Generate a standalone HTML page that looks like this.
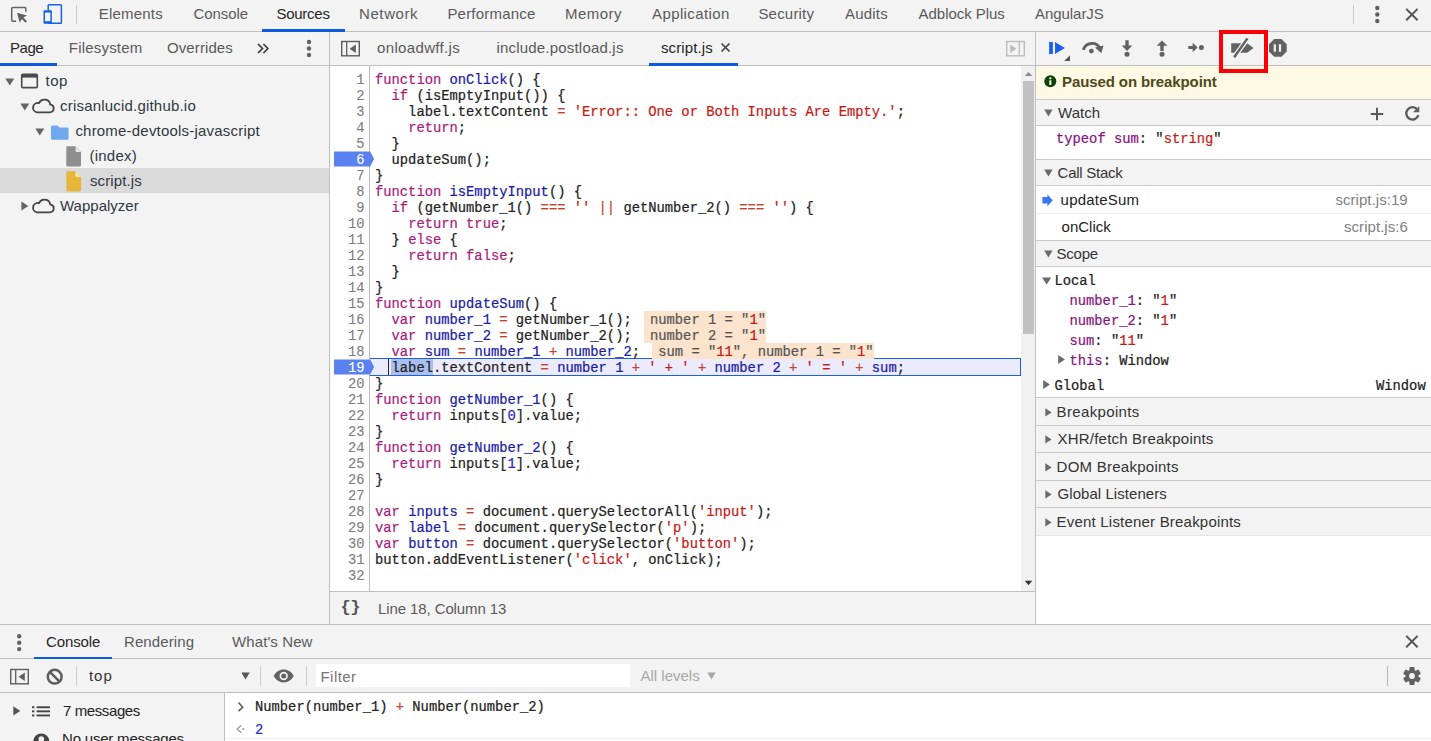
<!DOCTYPE html>
<html><head><meta charset="utf-8"><title>DevTools</title>
<style>
html,body{margin:0;padding:0}
body{width:1431px;height:741px;overflow:hidden;position:relative;background:#fff;font-family:"Liberation Sans",sans-serif;font-size:15px}
.b{position:absolute;display:block}
.t{position:absolute;white-space:pre;font-family:"Liberation Sans",sans-serif;font-size:15px;line-height:20px;height:20px}
.m{position:absolute;white-space:pre;font-family:"Liberation Mono",monospace;font-size:13.8px;line-height:16px;height:16px;color:#222;-webkit-text-stroke:0.22px}
.k{color:#a81c7e}.d{color:#1a1aa6}.s{color:#c41a16}.o{color:#c2452d}.n{color:#2a1fc0}.p{color:#881280}.n2{color:#2030cc}.u{color:transparent;-webkit-text-stroke:0}.g{color:#555}
</style></head>
<body>
<div class="b" style="left:0px;top:0px;width:1431px;height:31px;background:#f3f3f3;"></div>
<div class="b" style="left:0px;top:31px;width:1431px;height:1px;background:#bfbfbf;"></div>
<div class="b" style="left:0px;top:32px;width:329px;height:593px;background:#f3f3f3;"></div>
<div class="b" style="left:329px;top:32px;width:1px;height:593px;background:#bfbfbf;"></div>
<div class="b" style="left:0px;top:65px;width:329px;height:1px;background:#bfbfbf;"></div>
<div class="b" style="left:330px;top:32px;width:705px;height:33px;background:#f3f3f3;"></div>
<div class="b" style="left:330px;top:65px;width:705px;height:1px;background:#bfbfbf;"></div>
<div class="b" style="left:330px;top:592px;width:705px;height:33px;background:#f3f3f3;"></div>
<div class="b" style="left:330px;top:591px;width:705px;height:1px;background:#bfbfbf;"></div>
<div class="b" style="left:1035px;top:32px;width:1px;height:593px;background:#bfbfbf;"></div>
<div class="b" style="left:1036px;top:32px;width:395px;height:33px;background:#f3f3f3;"></div>
<div class="b" style="left:1036px;top:65px;width:395px;height:1px;background:#bfbfbf;"></div>
<svg class="b" style="left:8px;top:4px" width="24" height="22" viewBox="0 0 24 22"><path d="M17.8 7.7V4.4a1 1 0 0 0-1-1H4.7a1 1 0 0 0-1 1v11.8a1 1 0 0 0 1 1h3.4" fill="none" stroke="#626262" stroke-width="1.5"/><path d="M9 8.8l10 2.7-3.6 2.1 3.6 3.6-1.5 1.5-3.6-3.6-2.1 3.6z" fill="#626262"/></svg>
<svg class="b" style="left:42px;top:2px" width="22" height="24" viewBox="0 0 22 24"><rect x="6.2" y="2.7" width="13.2" height="18.6" rx="0.8" fill="none" stroke="#1565e0" stroke-width="1.5"/><rect x="1.5" y="8.2" width="8.4" height="13.6" rx="1" fill="#1565e0"/><rect x="3" y="10.6" width="5.4" height="8.6" fill="#f3f3f3"/></svg>
<div class="b" style="left:76px;top:5px;width:1px;height:19px;background:#ccc;"></div>
<span class="t" style="left:98.80px;top:4.00px;color:#5a5a5a;letter-spacing:0.2px;">Elements</span>
<span class="t" style="left:193.60px;top:4.00px;color:#5a5a5a;letter-spacing:-0.1px;">Console</span>
<span class="t" style="left:276.40px;top:4.00px;color:#262626;letter-spacing:-0.25px;">Sources</span>
<span class="t" style="left:359.00px;top:4.00px;color:#5a5a5a;letter-spacing:0.6px;">Network</span>
<span class="t" style="left:447.40px;top:4.00px;color:#5a5a5a;letter-spacing:0.2px;">Performance</span>
<span class="t" style="left:565.00px;top:4.00px;color:#5a5a5a;letter-spacing:0.45px;">Memory</span>
<span class="t" style="left:652.00px;top:4.00px;color:#5a5a5a;letter-spacing:0.4px;">Application</span>
<span class="t" style="left:758.40px;top:4.00px;color:#5a5a5a;letter-spacing:0.2px;">Security</span>
<span class="t" style="left:845.00px;top:4.00px;color:#5a5a5a;letter-spacing:0.2px;">Audits</span>
<span class="t" style="left:918.60px;top:4.00px;color:#5a5a5a;letter-spacing:-0.05px;">Adblock Plus</span>
<span class="t" style="left:1035.00px;top:4.00px;color:#5a5a5a;letter-spacing:-0.05px;">AngularJS</span>
<div class="b" style="left:262px;top:29px;width:83px;height:3px;background:#0b5ae0;"></div>
<div class="b" style="left:1353px;top:5px;width:1px;height:19px;background:#ccc;"></div>
<svg class="b" style="left:1373px;top:5px" width="8" height="20" viewBox="0 0 8 20"><circle cx="4.3" cy="3" r="2.2" fill="#626262"/><circle cx="4.3" cy="9.5" r="2.2" fill="#626262"/><circle cx="4.3" cy="16" r="2.2" fill="#626262"/></svg>
<svg class="b" style="left:1404px;top:7px" width="16" height="15" viewBox="0 0 16 15"><path d="M2.2 1.9l11.4 11.4M13.6 1.9L2.2 13.3" stroke="#555" stroke-width="2" fill="none"/></svg>
<span class="t" style="left:10.00px;top:38.00px;color:#262626;letter-spacing:-0.45px;">Page</span>
<span class="t" style="left:68.80px;top:38.00px;color:#5a5a5a;letter-spacing:0.2px;">Filesystem</span>
<span class="t" style="left:167.00px;top:38.00px;color:#5a5a5a;letter-spacing:0.1px;">Overrides</span>
<div class="b" style="left:0px;top:63px;width:57px;height:3px;background:#0b5ae0;"></div>
<svg class="b" style="left:257px;top:42.5px" width="12" height="11" viewBox="0 0 12 11"><path d="M1 1l4.500 4.500L1 10M6.400 1l4.500 4.500L6.400 10" fill="none" stroke="#3a3a3a" stroke-width="1.700"/></svg>
<svg class="b" style="left:305px;top:39px" width="8" height="20" viewBox="0 0 8 20"><circle cx="4" cy="3" r="2.2" fill="#626262"/><circle cx="4" cy="9.5" r="2.2" fill="#626262"/><circle cx="4" cy="16" r="2.2" fill="#626262"/></svg>
<div class="b" style="left:0px;top:168px;width:329px;height:25px;background:#dadada;"></div>
<svg class="b" style="left:5px;top:77.5px" width="10" height="8" viewBox="0 0 10 8"><path d="M0.3 0.5h9L4.8 7.6z" fill="#646464"/></svg>
<svg class="b" style="left:20px;top:102.5px" width="10" height="8" viewBox="0 0 10 8"><path d="M0.3 0.5h9L4.8 7.6z" fill="#646464"/></svg>
<svg class="b" style="left:35px;top:127.5px" width="10" height="8" viewBox="0 0 10 8"><path d="M0.3 0.5h9L4.8 7.6z" fill="#646464"/></svg>
<svg class="b" style="left:21px;top:201px" width="8" height="10" viewBox="0 0 8 10"><path d="M0.4 0.4v9L7.4 4.9z" fill="#646464"/></svg>
<svg class="b" style="left:20px;top:73px" width="19" height="16" viewBox="0 0 19 16"><rect x="1.7" y="1.4" width="15.6" height="13.2" rx="1.2" fill="none" stroke="#4a4a4a" stroke-width="1.6"/><rect x="1.7" y="1.4" width="15.6" height="3.2" fill="#4a4a4a"/></svg>
<svg class="b" style="left:30.5px;top:98px" width="26" height="16" viewBox="0 0 26 16"><g transform="translate(-0.6,0) scale(1.05,1)"><path d="M6.3 14.300h12a3.900 3.900 0 0 0 .6-7.750a5.600 5.600 0 0 0-10.700-1.500a4.700 4.700 0 0 0-1.900 9.250z" fill="none" stroke="#444" stroke-width="1.750" stroke-linejoin="round"/></g></svg>
<svg class="b" style="left:30.5px;top:198px" width="26" height="16" viewBox="0 0 26 16"><g transform="translate(-0.6,0) scale(1.05,1)"><path d="M6.3 14.300h12a3.900 3.900 0 0 0 .6-7.750a5.600 5.600 0 0 0-10.700-1.500a4.700 4.700 0 0 0-1.900 9.250z" fill="none" stroke="#444" stroke-width="1.750" stroke-linejoin="round"/></g></svg>
<svg class="b" style="left:51px;top:124.5px" width="18" height="16" viewBox="0 0 18 16"><path d="M0 1.600a1.200 1.200 0 0 1 1.200-1.200h5.200l2 2.200h8a1.200 1.200 0 0 1 1.200 1.200v9.700a1.200 1.200 0 0 1-1.200 1.200H1.200a1.200 1.200 0 0 1-1.200-1.200z" fill="#70a8ee"/></svg>
<svg class="b" style="left:66px;top:145.5px" width="16" height="21" viewBox="0 0 16 21"><path d="M0.3 1.6a1.3 1.3 0 0 1 1.3-1.3h7.9l5.5 5.6v13.2a1.3 1.3 0 0 1-1.3 1.3H1.6a1.3 1.3 0 0 1-1.3-1.3z" fill="#8e8e8e"/><path d="M9.5 0.3v4.4a1.2 1.2 0 0 0 1.2 1.2H15z" fill="#e6e6e6"/></svg>
<svg class="b" style="left:66px;top:170.5px" width="16" height="21" viewBox="0 0 16 21"><path d="M0.3 1.6a1.3 1.3 0 0 1 1.3-1.3h7.9l5.5 5.6v13.2a1.3 1.3 0 0 1-1.3 1.3H1.6a1.3 1.3 0 0 1-1.3-1.3z" fill="#e4b63a"/><path d="M9.5 0.3v4.4a1.2 1.2 0 0 0 1.2 1.2H15z" fill="#f7e8b8"/></svg>
<span class="t" style="left:45.60px;top:71.00px;color:#303942;letter-spacing:0.45px;">top</span>
<span class="t" style="left:60.00px;top:96.00px;color:#303942;letter-spacing:0.2px;">crisanlucid.github.io</span>
<span class="t" style="left:75.40px;top:121.00px;color:#303942;letter-spacing:0.2px;">chrome-devtools-javascript</span>
<span class="t" style="left:89.40px;top:146.00px;color:#303942;letter-spacing:0.25px;">(index)</span>
<span class="t" style="left:90.00px;top:171.00px;color:#303942;letter-spacing:0.1px;">script.js</span>
<span class="t" style="left:60.00px;top:196.00px;color:#303942;letter-spacing:0.0px;">Wappalyzer</span>
<svg class="b" style="left:341px;top:40px" width="19" height="17" viewBox="0 0 19 17"><g ><rect x="0.700" y="1.500" width="17.600" height="14.300" fill="none" stroke="#5e5e5e" stroke-width="1.400"/><path d="M5.700 1.500v14.300" stroke="#5e5e5e" stroke-width="1.300"/><path d="M14.800 4.400v8.500L8.600 8.650z" fill="#5e5e5e"/></g></svg>
<svg class="b" style="left:1006px;top:40px" width="19" height="17" viewBox="0 0 19 17"><g transform="translate(19,0) scale(-1,1)"><rect x="0.700" y="1.500" width="17.600" height="14.300" fill="none" stroke="#bdbdbd" stroke-width="1.400"/><path d="M5.700 1.500v14.300" stroke="#bdbdbd" stroke-width="1.300"/><path d="M14.800 4.400v8.500L8.600 8.650z" fill="#bdbdbd"/></g></svg>
<span class="t" style="left:377.00px;top:38.00px;color:#5a5a5a;letter-spacing:0.35px;">onloadwff.js</span>
<span class="t" style="left:496.40px;top:38.00px;color:#5a5a5a;letter-spacing:0.2px;">include.postload.js</span>
<span class="t" style="left:661.00px;top:38.00px;color:#262626;letter-spacing:0.1px;">script.js</span>
<svg class="b" style="left:720px;top:42px" width="11" height="11" viewBox="0 0 11 11"><path d="M1.5 1.5l8 8M9.5 1.5l-8 8" stroke="#444" stroke-width="1.7" fill="none"/></svg>
<div class="b" style="left:649px;top:63px;width:89px;height:3px;background:#0b5ae0;"></div>
<span class="b" style="left:340.5px;top:598px;font:700 17px 'Liberation Mono',monospace;letter-spacing:-0.400px;color:#555;line-height:20px">{}</span>
<span class="t" style="left:378.00px;top:599.00px;color:#5a5a5a;letter-spacing:-0.1px;">Line 18, Column 13</span>
<div class="b" style="left:369px;top:66px;width:1px;height:525px;background:#bbb;"></div>
<div class="b" style="left:1021px;top:66px;width:14px;height:525px;background:#f1f1f1;"></div>
<div class="b" style="left:1023px;top:81px;width:11px;height:253px;background:#c1c1c1;"></div>
<svg class="b" style="left:1021px;top:66px" width="14" height="16" viewBox="0 0 14 16"><path d="M3.800 10.100L7.500 5.900l3.700 4.200z" fill="#8a8a8a"/></svg>
<svg class="b" style="left:1021px;top:575px" width="14" height="16" viewBox="0 0 14 16"><path d="M3.800 5.800L7.500 10.200l3.700-4.400z" fill="#333"/></svg>
<div class="b" style="left:370px;top:358px;width:651px;height:18px;background:#ebebfd;box-sizing:border-box;border:1px solid #1e5fe0;border-left:none"></div>
<div class="b" style="left:391px;top:359px;width:42px;height:16px;background:#a9bff0;"></div>
<div class="b" style="left:388px;top:359px;width:1px;height:16px;background:#223;"></div>
<svg class="b" style="left:334px;top:151px" width="41" height="16" viewBox="0 0 41 16"><path d="M0 0.5h36.2l3.9 7.5-3.9 7.5H0z" fill="#5b81f0"/></svg>
<svg class="b" style="left:334px;top:359px" width="41" height="16" viewBox="0 0 41 16"><path d="M0 0.5h36.2l3.9 7.5-3.9 7.5H0z" fill="#5b81f0"/></svg>
<div class="b" style="left:644px;top:311px;width:122px;height:32px;background:#fce3cd;"></div>
<div class="b" style="left:652px;top:343px;width:222px;height:16px;background:#fce3cd;"></div>
<span class="m" style="left:330px;width:34.5px;text-align:right;top:73.0px;color:#808080;-webkit-text-stroke:0.12px">1</span>
<span class="m" style="left:375.0px;top:73.0px"><span class="k">function</span> <span class="d">onClick</span>() {</span>
<span class="m" style="left:330px;width:34.5px;text-align:right;top:89.0px;color:#808080;-webkit-text-stroke:0.12px">2</span>
<span class="m" style="left:375.0px;top:89.0px">  <span class="k">if</span> (isEmptyInput()) {</span>
<span class="m" style="left:330px;width:34.5px;text-align:right;top:105.0px;color:#808080;-webkit-text-stroke:0.12px">3</span>
<span class="m" style="left:375.0px;top:105.0px">    label.textContent <span class="o">=</span> <span class="s">'Error:: One or Both Inputs Are Empty.'</span>;</span>
<span class="m" style="left:330px;width:34.5px;text-align:right;top:121.0px;color:#808080;-webkit-text-stroke:0.12px">4</span>
<span class="m" style="left:375.0px;top:121.0px">    <span class="k">return</span>;</span>
<span class="m" style="left:330px;width:34.5px;text-align:right;top:137.0px;color:#808080;-webkit-text-stroke:0.12px">5</span>
<span class="m" style="left:375.0px;top:137.0px">  }</span>
<span class="m" style="left:330px;width:34.5px;text-align:right;top:153.0px;color:#fff;-webkit-text-stroke:0.12px">6</span>
<span class="m" style="left:375.0px;top:153.0px">  updateSum();</span>
<span class="m" style="left:330px;width:34.5px;text-align:right;top:169.0px;color:#808080;-webkit-text-stroke:0.12px">7</span>
<span class="m" style="left:375.0px;top:169.0px">}</span>
<span class="m" style="left:330px;width:34.5px;text-align:right;top:185.0px;color:#808080;-webkit-text-stroke:0.12px">8</span>
<span class="m" style="left:375.0px;top:185.0px"><span class="k">function</span> <span class="d">isEmptyInput</span>() {</span>
<span class="m" style="left:330px;width:34.5px;text-align:right;top:201.0px;color:#808080;-webkit-text-stroke:0.12px">9</span>
<span class="m" style="left:375.0px;top:201.0px">  <span class="k">if</span> (getNumber_1() <span class="o">===</span> <span class="s">''</span> <span class="o">||</span> getNumber_2() <span class="o">===</span> <span class="s">''</span>) {</span>
<span class="m" style="left:330px;width:34.5px;text-align:right;top:217.0px;color:#808080;-webkit-text-stroke:0.12px">10</span>
<span class="m" style="left:375.0px;top:217.0px">    <span class="k">return</span> <span class="k">true</span>;</span>
<span class="m" style="left:330px;width:34.5px;text-align:right;top:233.0px;color:#808080;-webkit-text-stroke:0.12px">11</span>
<span class="m" style="left:375.0px;top:233.0px">  } <span class="k">else</span> {</span>
<span class="m" style="left:330px;width:34.5px;text-align:right;top:249.0px;color:#808080;-webkit-text-stroke:0.12px">12</span>
<span class="m" style="left:375.0px;top:249.0px">    <span class="k">return</span> <span class="k">false</span>;</span>
<span class="m" style="left:330px;width:34.5px;text-align:right;top:265.0px;color:#808080;-webkit-text-stroke:0.12px">13</span>
<span class="m" style="left:375.0px;top:265.0px">  }</span>
<span class="m" style="left:330px;width:34.5px;text-align:right;top:281.0px;color:#808080;-webkit-text-stroke:0.12px">14</span>
<span class="m" style="left:375.0px;top:281.0px">}</span>
<span class="m" style="left:330px;width:34.5px;text-align:right;top:297.0px;color:#808080;-webkit-text-stroke:0.12px">15</span>
<span class="m" style="left:375.0px;top:297.0px"><span class="k">function</span> <span class="d">updateSum</span>() {</span>
<span class="m" style="left:330px;width:34.5px;text-align:right;top:313.0px;color:#808080;-webkit-text-stroke:0.12px">16</span>
<span class="m" style="left:375.0px;top:313.0px">  <span class="k">var</span> <span class="d">number_1</span> <span class="o">=</span> getNumber_1();</span>
<span class="m" style="left:330px;width:34.5px;text-align:right;top:329.0px;color:#808080;-webkit-text-stroke:0.12px">17</span>
<span class="m" style="left:375.0px;top:329.0px">  <span class="k">var</span> <span class="d">number_2</span> <span class="o">=</span> getNumber_2();</span>
<span class="m" style="left:330px;width:34.5px;text-align:right;top:345.0px;color:#808080;-webkit-text-stroke:0.12px">18</span>
<span class="m" style="left:375.0px;top:345.0px">  <span class="k">var</span> <span class="d">sum</span> <span class="o">=</span> <span class="d">number_1</span> <span class="o">+</span> <span class="d">number_2</span>;</span>
<span class="m" style="left:330px;width:34.5px;text-align:right;top:361.0px;color:#fff;-webkit-text-stroke:0.12px">19</span>
<span class="m" style="left:375.0px;top:361.0px">  label.textContent <span class="o">=</span> <span class="d">number<span class="u">_</span>1</span> <span class="o">+</span> <span class="s">' + '</span> <span class="o">+</span> <span class="d">number<span class="u">_</span>2</span> <span class="o">+</span> <span class="s">' = '</span> <span class="o">+</span> <span class="d">sum</span>;</span>
<span class="m" style="left:330px;width:34.5px;text-align:right;top:377.0px;color:#808080;-webkit-text-stroke:0.12px">20</span>
<span class="m" style="left:375.0px;top:377.0px">}</span>
<span class="m" style="left:330px;width:34.5px;text-align:right;top:393.0px;color:#808080;-webkit-text-stroke:0.12px">21</span>
<span class="m" style="left:375.0px;top:393.0px"><span class="k">function</span> <span class="d">getNumber_1</span>() {</span>
<span class="m" style="left:330px;width:34.5px;text-align:right;top:409.0px;color:#808080;-webkit-text-stroke:0.12px">22</span>
<span class="m" style="left:375.0px;top:409.0px">  <span class="k">return</span> inputs[<span class="n">0</span>].value;</span>
<span class="m" style="left:330px;width:34.5px;text-align:right;top:425.0px;color:#808080;-webkit-text-stroke:0.12px">23</span>
<span class="m" style="left:375.0px;top:425.0px">}</span>
<span class="m" style="left:330px;width:34.5px;text-align:right;top:441.0px;color:#808080;-webkit-text-stroke:0.12px">24</span>
<span class="m" style="left:375.0px;top:441.0px"><span class="k">function</span> <span class="d">getNumber_2</span>() {</span>
<span class="m" style="left:330px;width:34.5px;text-align:right;top:457.0px;color:#808080;-webkit-text-stroke:0.12px">25</span>
<span class="m" style="left:375.0px;top:457.0px">  <span class="k">return</span> inputs[<span class="n">1</span>].value;</span>
<span class="m" style="left:330px;width:34.5px;text-align:right;top:473.0px;color:#808080;-webkit-text-stroke:0.12px">26</span>
<span class="m" style="left:375.0px;top:473.0px">}</span>
<span class="m" style="left:330px;width:34.5px;text-align:right;top:489.0px;color:#808080;-webkit-text-stroke:0.12px">27</span>
<span class="m" style="left:330px;width:34.5px;text-align:right;top:505.0px;color:#808080;-webkit-text-stroke:0.12px">28</span>
<span class="m" style="left:375.0px;top:505.0px"><span class="k">var</span> <span class="d">inputs</span> <span class="o">=</span> document.querySelectorAll(<span class="s">'input'</span>);</span>
<span class="m" style="left:330px;width:34.5px;text-align:right;top:521.0px;color:#808080;-webkit-text-stroke:0.12px">29</span>
<span class="m" style="left:375.0px;top:521.0px"><span class="k">var</span> <span class="d">label</span> <span class="o">=</span> document.querySelector(<span class="s">'p'</span>);</span>
<span class="m" style="left:330px;width:34.5px;text-align:right;top:537.0px;color:#808080;-webkit-text-stroke:0.12px">30</span>
<span class="m" style="left:375.0px;top:537.0px"><span class="k">var</span> <span class="d">button</span> <span class="o">=</span> document.querySelector(<span class="s">'button'</span>);</span>
<span class="m" style="left:330px;width:34.5px;text-align:right;top:553.0px;color:#808080;-webkit-text-stroke:0.12px">31</span>
<span class="m" style="left:375.0px;top:553.0px">button.addEventListener(<span class="s">'click'</span>, onClick);</span>
<span class="m" style="left:330px;width:34.5px;text-align:right;top:569.0px;color:#808080;-webkit-text-stroke:0.12px">32</span>
<span class="m" style="left:650px;top:313.0px"><span class="g">number<span class="u">_</span>1 = "</span><span class="s">1</span><span class="g">"</span></span>
<span class="m" style="left:650px;top:329.0px"><span class="g">number<span class="u">_</span>2 = "</span><span class="s">1</span><span class="g">"</span></span>
<span class="m" style="left:658.3px;top:345.0px"><span class="g">sum = "</span><span class="s">11</span><span class="g">", number<span class="u">_</span>1 = "</span><span class="s">1</span><span class="g">"</span></span>
<svg class="b" style="left:1048px;top:41px" width="24" height="21" viewBox="0 0 24 21"><rect x="1.1" y="1" width="3.8" height="12" fill="#1a62e8"/><path d="M7 1l9.9 6L7 13z" fill="#1a62e8"/><path d="M22 14.3v5.6h-5.8z" fill="#555"/></svg>
<svg class="b" style="left:1080px;top:39px" width="26" height="16" viewBox="0 0 26 16"><path d="M3.3 10.9A9.0 9.0 0 0 1 20.0 9.4" fill="none" stroke="#626262" stroke-width="2.9"/><path d="M15.0 8.5l8.6-1.9-2.3 7.6z" fill="#626262"/><circle cx="11.4" cy="12.1" r="2.4" fill="#626262"/></svg>
<svg class="b" style="left:1120px;top:39px" width="14" height="19" viewBox="0 0 14 19"><path d="M5.3 1.3h3.4v5.3h3.6L7 11.9 1.700 6.600h3.600z" fill="#626262"/><circle cx="7" cy="15.3" r="2.5" fill="#626262"/></svg>
<svg class="b" style="left:1155px;top:39px" width="14" height="19" viewBox="0 0 14 19"><path d="M7 1.5l5.300 5.300H8.700v5.300H5.300V6.800H1.700z" fill="#626262"/><circle cx="7" cy="15.300" r="2.500" fill="#626262"/></svg>
<svg class="b" style="left:1187px;top:42px" width="18" height="12" viewBox="0 0 18 12"><path d="M1.300 3.900h4.400V0.700l4.900 4.800-4.900 4.800V7.100H1.300z" fill="#626262"/><circle cx="14.400" cy="5.500" r="2.500" fill="#626262"/></svg>
<svg class="b" style="left:1229px;top:36px" width="27" height="24" viewBox="0 0 27 24"><path d="M2.200 7.300h16l6.300 4.700-6.300 4.700H2.200z" fill="#626262"/><path d="M4.2 22.4L19.6 1.2" stroke="#f3f3f3" stroke-width="5"/><path d="M5.2 21.2L18.4 2.4" stroke="#626262" stroke-width="2.5"/></svg>
<svg class="b" style="left:1268px;top:38px" width="20" height="20" viewBox="0 0 20 20"><path d="M6.2 1.1h7.3l5.2 5.2v7.3l-5.2 5.2H6.2L1 13.600V6.3z" fill="#626262"/><rect x="5.700" y="6.300" width="2.2" height="7.400" fill="#f3f3f3"/><rect x="10.900" y="6.300" width="2.200" height="7.400" fill="#f3f3f3"/></svg>
<div class="b" style="left:1036px;top:66px;width:395px;height:33px;background:#fef9e5;"></div>
<div class="b" style="left:1036px;top:99px;width:395px;height:1px;background:#cacaca;"></div>
<svg class="b" style="left:1044px;top:75px" width="13" height="13" viewBox="0 0 13 13"><circle cx="6.3" cy="6.2" r="6" fill="#0d420d"/><rect x="5.300" y="5.3" width="2.1" height="4.600" fill="#fef9e5"/><circle cx="6.3" cy="3.300" r="1.15" fill="#fef9e5"/></svg>
<span class="t" style="left:1062.00px;top:72.00px;color:#4f4a1a;letter-spacing:-0.1px;font-weight:700;">Paused on breakpoint</span>
<div class="b" style="left:1036px;top:100px;width:395px;height:25px;background:#f3f3f3;"></div>
<div class="b" style="left:1036px;top:125px;width:395px;height:1px;background:#cacaca;"></div>
<svg class="b" style="left:1043.5px;top:109.0px" width="9" height="8" viewBox="0 0 9 8"><path d="M0.2 0.4h8.400L4.4 7.4z" fill="#6a6a6a"/></svg>
<span class="t" style="left:1058.00px;top:103.00px;color:#333;letter-spacing:0.05px;">Watch</span>
<svg class="b" style="left:1370px;top:106.5px" width="14" height="14" viewBox="0 0 14 14"><path d="M7 0.800v12.400M0.800 7h12.400" stroke="#5a5a5a" stroke-width="2" fill="none"/></svg>
<svg class="b" style="left:1403px;top:105px" width="18" height="17" viewBox="0 0 18 17"><path d="M14.3 4.500A6.200 6.200 0 1 0 15.400 10.200" fill="none" stroke="#5a5a5a" stroke-width="2.300"/><path d="M16.300 0.900v6.300H10z" fill="#626262"/></svg>
<span class="m" style="left:1056px;top:132px;"><span class="p">typeof sum</span>: "<span class="s">string</span>"</span>
<div class="b" style="left:1036px;top:159px;width:395px;height:1px;background:#cacaca;"></div>
<div class="b" style="left:1036px;top:160px;width:395px;height:25px;background:#f3f3f3;"></div>
<div class="b" style="left:1036px;top:185px;width:395px;height:1px;background:#cacaca;"></div>
<svg class="b" style="left:1043.5px;top:169.0px" width="9" height="8" viewBox="0 0 9 8"><path d="M0.2 0.4h8.400L4.4 7.4z" fill="#6a6a6a"/></svg>
<span class="t" style="left:1057.60px;top:163.00px;color:#333;letter-spacing:-0.25px;">Call Stack</span>
<svg class="b" style="left:1041.5px;top:193.5px" width="11" height="13" viewBox="0 0 11 13"><path d="M0.4 3.1h5V0.4l5.4 5.900-5.400 5.900V9.500h-5z" fill="#3b78f0"/></svg>
<span class="t" style="left:1060.60px;top:190.00px;color:#222;letter-spacing:0.2px;">updateSum</span>
<span class="t" style="left:1335.40px;top:190.00px;color:#808080;letter-spacing:0.05px;">script.js:19</span>
<div class="b" style="left:1036px;top:213px;width:395px;height:1px;background:#ececec;"></div>
<span class="t" style="left:1061.60px;top:217.00px;color:#222;letter-spacing:0.0px;">onClick</span>
<span class="t" style="left:1344.00px;top:217.00px;color:#808080;letter-spacing:0.05px;">script.js:6</span>
<div class="b" style="left:1036px;top:240px;width:395px;height:1px;background:#cacaca;"></div>
<div class="b" style="left:1036px;top:241px;width:395px;height:25px;background:#f3f3f3;"></div>
<div class="b" style="left:1036px;top:266px;width:395px;height:1px;background:#cacaca;"></div>
<svg class="b" style="left:1043.5px;top:250.0px" width="9" height="8" viewBox="0 0 9 8"><path d="M0.2 0.4h8.400L4.4 7.4z" fill="#6a6a6a"/></svg>
<span class="t" style="left:1056.60px;top:244.00px;color:#333;letter-spacing:-0.25px;">Scope</span>
<svg class="b" style="left:1042px;top:276.5px" width="10" height="8" viewBox="0 0 10 8"><path d="M0 0.400h9.300L4.650 7.500z" fill="#6a6a6a"/></svg>
<span class="m" style="left:1054.5px;top:274px;">Local</span>
<span class="m" style="left:1069.5px;top:294px;"><span class="p">number_1</span>: "<span class="s">1</span>"</span>
<span class="m" style="left:1069.5px;top:314px;"><span class="p">number_2</span>: "<span class="s">1</span>"</span>
<span class="m" style="left:1069.5px;top:334px;"><span class="p">sum</span>: "<span class="s">11</span>"</span>
<svg class="b" style="left:1058px;top:355px" width="8" height="10" viewBox="0 0 8 10"><path d="M0.200 0.100v8.900L6.900 4.550z" fill="#6a6a6a"/></svg>
<span class="m" style="left:1069.5px;top:354px;"><span class="p">this</span>: Window</span>
<svg class="b" style="left:1043px;top:380px" width="8" height="10" viewBox="0 0 8 10"><path d="M0.200 0.100v8.900L6.900 4.550z" fill="#6a6a6a"/></svg>
<span class="m" style="left:1054.5px;top:379px;">Global</span>
<span class="m" style="left:1376px;top:379px;">Window</span>
<div class="b" style="left:1036px;top:397px;width:395px;height:1px;background:#cacaca;"></div>
<div class="b" style="left:1036px;top:398px;width:395px;height:27px;background:#f3f3f3;"></div>
<div class="b" style="left:1036px;top:425px;width:395px;height:1px;background:#cacaca;"></div>
<svg class="b" style="left:1044.5px;top:407.9px" width="7" height="9" viewBox="0 0 7 9"><path d="M0.300 0.3v8.200L6.600 4.400z" fill="#6a6a6a"/></svg>
<span class="t" style="left:1056.60px;top:402.00px;color:#333;letter-spacing:0.35px;">Breakpoints</span>
<div class="b" style="left:1036px;top:426px;width:395px;height:26px;background:#f3f3f3;"></div>
<div class="b" style="left:1036px;top:452px;width:395px;height:1px;background:#cacaca;"></div>
<svg class="b" style="left:1044.5px;top:435.4px" width="7" height="9" viewBox="0 0 7 9"><path d="M0.300 0.3v8.200L6.600 4.400z" fill="#6a6a6a"/></svg>
<span class="t" style="left:1057.60px;top:429.00px;color:#333;letter-spacing:0.2px;">XHR/fetch Breakpoints</span>
<div class="b" style="left:1036px;top:453px;width:395px;height:27px;background:#f3f3f3;"></div>
<div class="b" style="left:1036px;top:480px;width:395px;height:1px;background:#cacaca;"></div>
<svg class="b" style="left:1044.5px;top:462.9px" width="7" height="9" viewBox="0 0 7 9"><path d="M0.300 0.3v8.200L6.600 4.400z" fill="#6a6a6a"/></svg>
<span class="t" style="left:1056.60px;top:457.00px;color:#333;letter-spacing:0.25px;">DOM Breakpoints</span>
<div class="b" style="left:1036px;top:481px;width:395px;height:26px;background:#f3f3f3;"></div>
<div class="b" style="left:1036px;top:507px;width:395px;height:1px;background:#cacaca;"></div>
<svg class="b" style="left:1044.5px;top:490.4px" width="7" height="9" viewBox="0 0 7 9"><path d="M0.300 0.3v8.200L6.600 4.400z" fill="#6a6a6a"/></svg>
<span class="t" style="left:1057.60px;top:484.00px;color:#333;letter-spacing:0.05px;">Global Listeners</span>
<div class="b" style="left:1036px;top:508px;width:395px;height:27px;background:#f3f3f3;"></div>
<div class="b" style="left:1036px;top:535px;width:395px;height:1px;background:#cacaca;"></div>
<svg class="b" style="left:1044.5px;top:517.9px" width="7" height="9" viewBox="0 0 7 9"><path d="M0.300 0.3v8.200L6.600 4.400z" fill="#6a6a6a"/></svg>
<span class="t" style="left:1056.60px;top:512.00px;color:#333;letter-spacing:0.2px;">Event Listener Breakpoints</span>
<div class="b" style="left:1036px;top:535px;width:395px;height:1px;background:#e6e6e6;"></div>
<div class="b" style="left:1219px;top:30px;width:49px;height:43px;background:transparent;box-sizing:border-box;border:4px solid #fb0007"></div>
<div class="b" style="left:0px;top:625px;width:1431px;height:33px;background:#f3f3f3;"></div>
<div class="b" style="left:0px;top:624px;width:1431px;height:1px;background:#bfbfbf;"></div>
<div class="b" style="left:0px;top:658px;width:1431px;height:1px;background:#bfbfbf;"></div>
<div class="b" style="left:0px;top:659px;width:1431px;height:33px;background:#f3f3f3;"></div>
<div class="b" style="left:0px;top:692px;width:1431px;height:1px;background:#bfbfbf;"></div>
<svg class="b" style="left:15px;top:633px" width="8" height="20" viewBox="0 0 8 20"><circle cx="4.2" cy="3.300" r="2.200" fill="#626262"/><circle cx="4.2" cy="9.700" r="2.200" fill="#626262"/><circle cx="4.200" cy="16.100" r="2.200" fill="#626262"/></svg>
<span class="t" style="left:46.00px;top:632.00px;color:#262626;letter-spacing:-0.1px;">Console</span>
<span class="t" style="left:124.00px;top:632.00px;color:#5a5a5a;letter-spacing:0.1px;">Rendering</span>
<span class="t" style="left:232.00px;top:632.00px;color:#5a5a5a;letter-spacing:0.1px;">What's New</span>
<div class="b" style="left:34px;top:657px;width:78px;height:2px;background:#0b5ae0;"></div>
<svg class="b" style="left:1404px;top:634px" width="16" height="15" viewBox="0 0 16 15"><path d="M2.2 1.900l11.400 11.400M13.600 1.900L2.200 13.300" stroke="#555" stroke-width="2" fill="none"/></svg>
<svg class="b" style="left:10px;top:668px" width="19" height="17" viewBox="0 0 19 17"><g ><rect x="0.700" y="1.500" width="17.600" height="14.300" fill="none" stroke="#5e5e5e" stroke-width="1.400"/><path d="M5.700 1.500v14.300" stroke="#5e5e5e" stroke-width="1.300"/><path d="M14.800 4.400v8.500L8.600 8.650z" fill="#5e5e5e"/></g></svg>
<svg class="b" style="left:45.5px;top:668px" width="18" height="18" viewBox="0 0 18 18"><circle cx="8.700" cy="8.700" r="6.900" fill="none" stroke="#5c5c5c" stroke-width="2.500"/><path d="M3.800 3.800l9.800 9.800" stroke="#5c5c5c" stroke-width="2.500"/></svg>
<div class="b" style="left:76px;top:666px;width:1px;height:20px;background:#ccc;"></div>
<span class="t" style="left:89.00px;top:666.00px;color:#333;letter-spacing:0.95px;">top</span>
<svg class="b" style="left:240.5px;top:671.5px" width="9" height="8" viewBox="0 0 9 8"><path d="M0.300 0.400h8.400L4.500 7.600z" fill="#555"/></svg>
<div class="b" style="left:260px;top:666px;width:1px;height:20px;background:#ccc;"></div>
<svg class="b" style="left:273px;top:669px" width="22" height="14" viewBox="0 0 22 14"><path d="M0.700 7C3 2.700 6.700 0.600 10.700 0.600S18.400 2.700 20.700 7C18.400 11.300 14.700 13.400 10.700 13.400S3 11.300 0.700 7z" fill="#626262"/><circle cx="10.700" cy="7" r="4.200" fill="#f3f3f3"/><circle cx="10.700" cy="7" r="2.500" fill="#626262"/></svg>
<div class="b" style="left:306px;top:666px;width:1px;height:20px;background:#ccc;"></div>
<div class="b" style="left:316px;top:664px;width:314px;height:23px;background:#fff;"></div>
<span class="t" style="left:320.50px;top:667.00px;color:#757575;letter-spacing:0.45px;">Filter</span>
<span class="t" style="left:640.50px;top:666.00px;color:#a8a8a8;letter-spacing:0.0px;">All levels</span>
<svg class="b" style="left:706.5px;top:671.5px" width="9" height="8" viewBox="0 0 9 8"><path d="M0.300 0.400h8.400L4.500 7.600z" fill="#a8a8a8"/></svg>
<div class="b" style="left:1387px;top:666px;width:1px;height:20px;background:#b8b8b8;"></div>
<svg class="b" style="left:1401.5px;top:666px" width="20" height="20" viewBox="0 0 20 20"><g transform="translate(10,10)" fill="#626262"><rect x="-2.600" y="-8.900" width="5.200" height="17.800" rx="0.900" transform="rotate(0)"/><rect x="-2.600" y="-8.900" width="5.200" height="17.800" rx="0.900" transform="rotate(60)"/><rect x="-2.600" y="-8.900" width="5.200" height="17.800" rx="0.900" transform="rotate(120)"/><circle r="6.500"/><circle r="2.900" fill="#f3f3f3"/></g></svg>
<div class="b" style="left:0px;top:693px;width:224px;height:48px;background:#f3f3f3;"></div>
<div class="b" style="left:224px;top:693px;width:1px;height:48px;background:#bfbfbf;"></div>
<svg class="b" style="left:12.5px;top:706px" width="8" height="10" viewBox="0 0 8 10"><path d="M0.300 0.300v9.200L7.300 4.900z" fill="#555"/></svg>
<svg class="b" style="left:32px;top:706px" width="19" height="11" viewBox="0 0 19 11"><g fill="#444"><rect x="0" y="0.300" width="2.400" height="1.900"/><rect x="0" y="4.400" width="2.400" height="1.900"/><rect x="0" y="8.500" width="2.400" height="1.900"/><rect x="4.600" y="0.300" width="13.400" height="1.900"/><rect x="4.600" y="4.400" width="13.400" height="1.900"/><rect x="4.600" y="8.500" width="13.400" height="1.900"/></g></svg>
<span class="t" style="left:63.00px;top:701.00px;color:#222;letter-spacing:-0.4px;">7 messages</span>
<svg class="b" style="left:33px;top:733px" width="17" height="17" viewBox="0 0 17 17"><circle cx="8.300" cy="8.500" r="8" fill="#444"/><circle cx="8.300" cy="6" r="2.800" fill="#f3f3f3"/></svg>
<span class="t" style="left:62.00px;top:729.00px;color:#222;letter-spacing:-0.2px;">No user messages</span>
<svg class="b" style="left:236.5px;top:701px" width="8" height="12" viewBox="0 0 8 12"><path d="M1.500 1.500l4.200 4.700L1.500 10.100" fill="none" stroke="#666" stroke-width="1.700"/></svg>
<span class="m" style="left:255px;top:700px;">Number(number_1) <span class="o">+</span> Number(number_2)</span>
<svg class="b" style="left:235.5px;top:724px" width="10" height="11" viewBox="0 0 10 11"><path d="M5.200 1.200L1.200 5l4 3.800" fill="none" stroke="#a0a0a0" stroke-width="1.500"/><circle cx="7.300" cy="5" r="1.100" fill="#a0a0a0"/></svg>
<span class="m" style="left:255px;top:723px;"><span class="n2">2</span></span>
<div class="b" style="left:225px;top:738px;width:1206px;height:1px;background:#f0f0f0;"></div>
</body></html>
